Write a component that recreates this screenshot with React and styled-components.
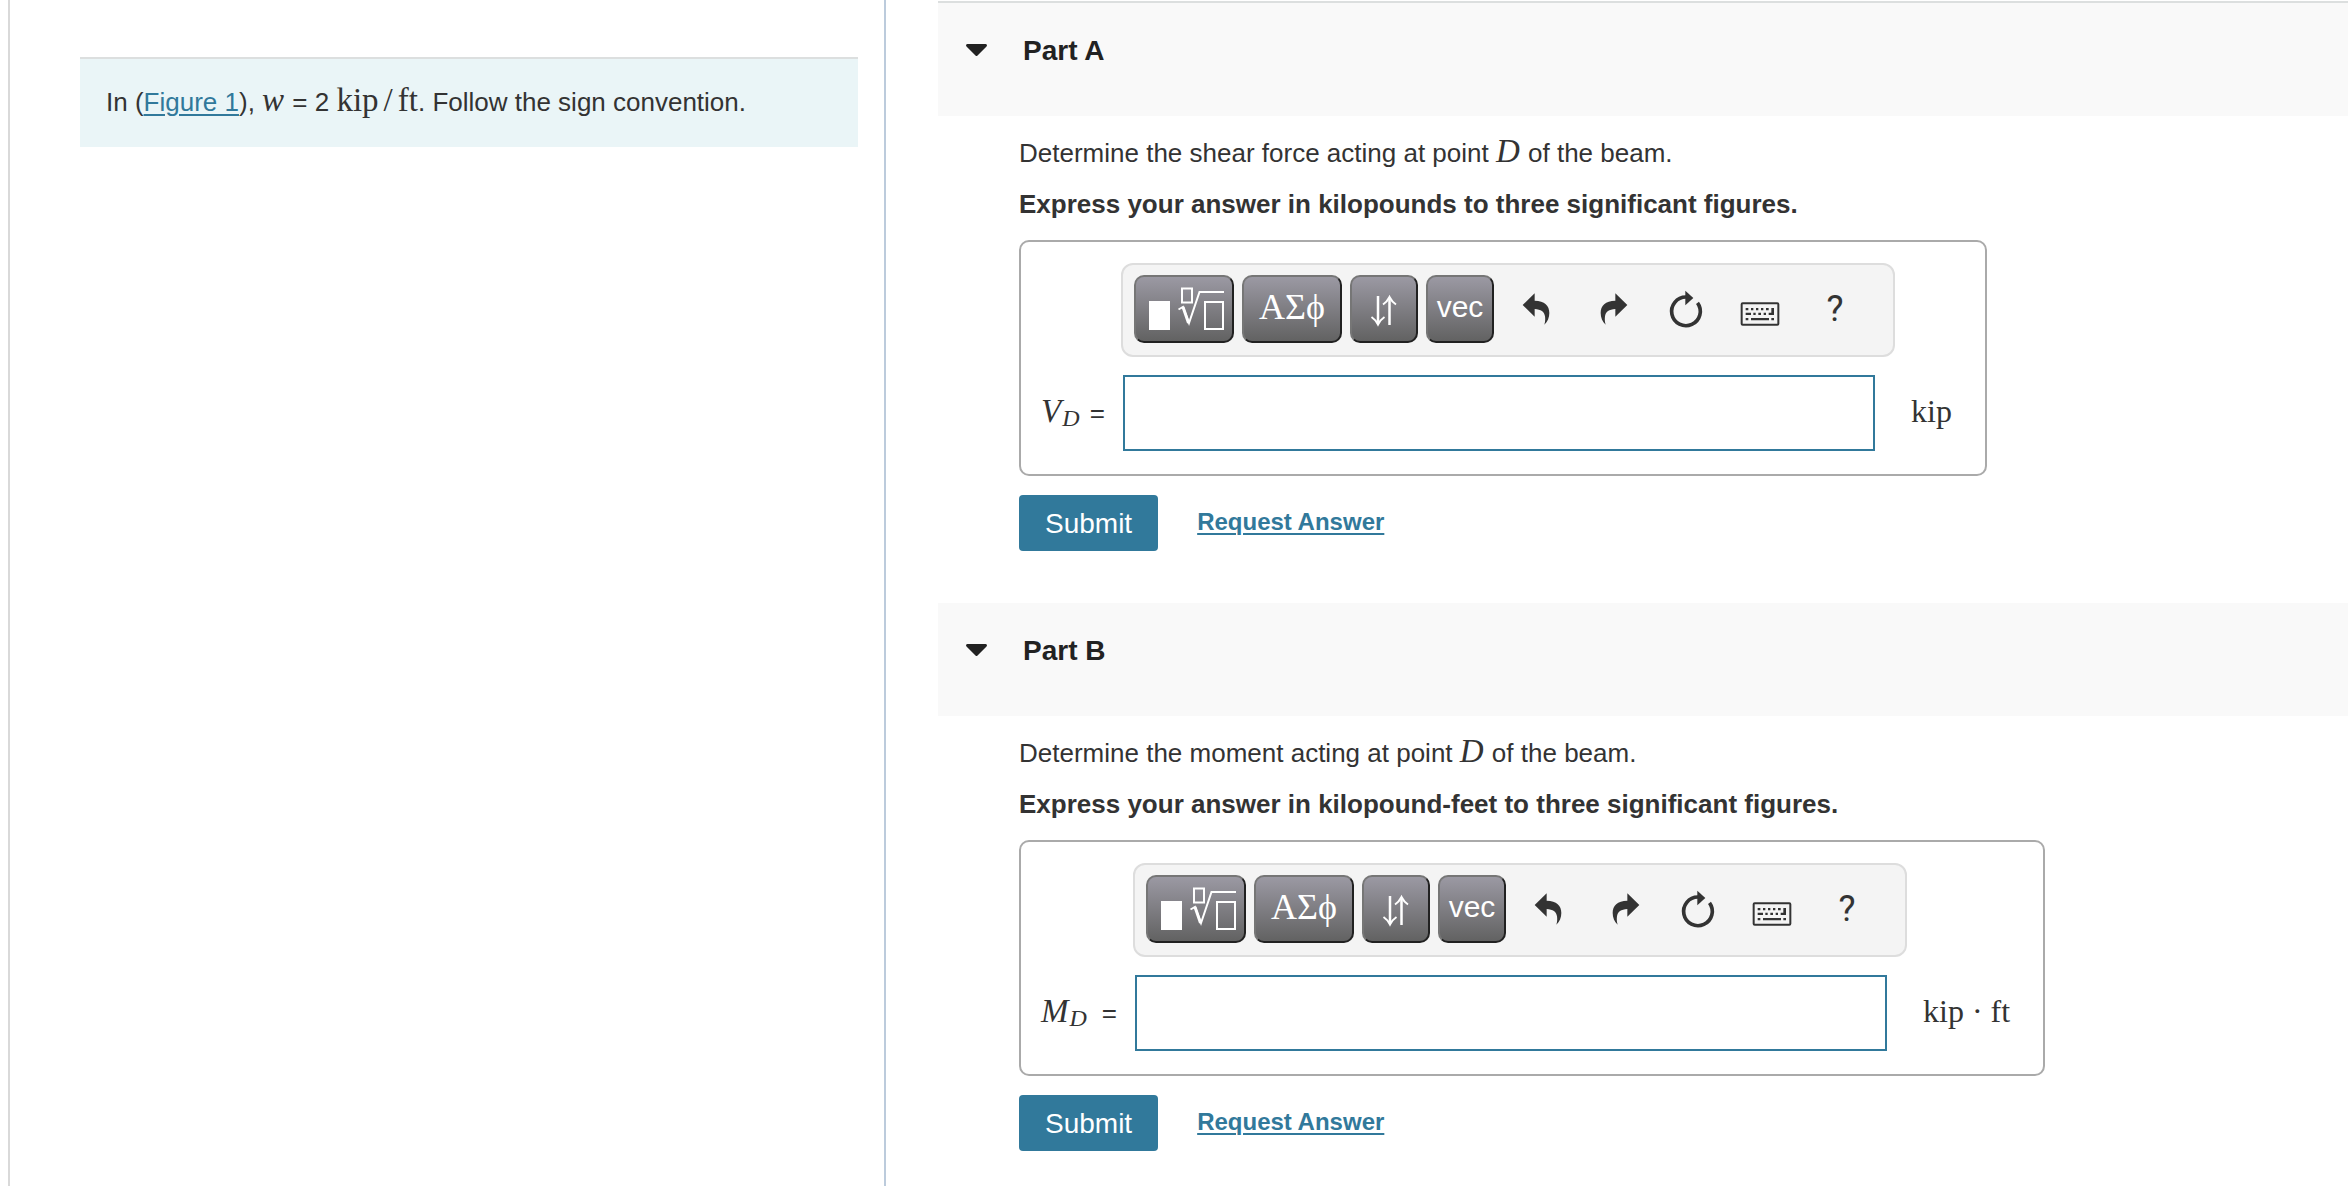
import { useState } from "react";
import styled, { createGlobalStyle } from "styled-components";

const parts = [
  {
    id: "A",
    quantity: "shear force",
    symbol: "V",
    unit: "kip",
    units: "kilopounds",
    labelWidth: 100,
    bordered: true
  },
  {
    id: "B",
    quantity: "moment",
    symbol: "M",
    unit: "kip · ft",
    units: "kilopound-feet",
    labelWidth: 112,
    bordered: false
  }
]

export default function App() {
  return (
    <>
      <GlobalStyle />
      <Page>
        <Aside>
          <Problem>
            In (<Link href="#figure1">Figure 1</Link>), <MathVar>w</MathVar> = 2{' '}
            <MathText>kip<Slash>/</Slash>ft</MathText>. Follow the sign convention.
          </Problem>
        </Aside>
        <Main>
          {parts.map(part=> <Part key={part.id} part={part} />)}
        </Main>
      </Page>
    </>
  )
}

const Part = ({part})=>{
  const [open, setOpen] = useState(true)
  const [answer, setAnswer] = useState('')
  const inputId = `answer-${part.id}`

  return (
    <section>
      <PartHeader $bordered={part.bordered}>
        <Toggle type="button" aria-expanded={open} onClick={()=>setOpen(!open)}>
          <Caret viewBox="0 0 21 14"><path d="M1.5 0h18a1.4 1.4 0 0 1 1 2.4l-9 9a1.4 1.4 0 0 1-2 0l-9-9A1.4 1.4 0 0 1 1.5 0z" /></Caret>
          Part {part.id}
        </Toggle>
      </PartHeader>
      {
        open &&
        <PartBody onSubmit={(e)=>e.preventDefault()}>
          <Question>
            Determine the {part.quantity} acting at point <MathVar>D</MathVar> of the beam.
          </Question>
          <Instruction>
            Express your answer in {part.units} to three significant figures.
          </Instruction>
          <AnswerBox $labelWidth={part.labelWidth}>
            <Toolbar />
            <AnswerLabel htmlFor={inputId}>
              <span><MathVar>{part.symbol}</MathVar><Sub>D</Sub></span>
              <span>=</span>
            </AnswerLabel>
            <AnswerInput
              id={inputId}
              type="text"
              autoComplete="off"
              value={answer}
              onChange={(e)=>setAnswer(e.target.value)}
            />
            <Unit>{part.unit}</Unit>
          </AnswerBox>
          <Actions>
            <Submit type="submit">Submit</Submit>
            <RequestLink href="#request">Request Answer</RequestLink>
          </Actions>
        </PartBody>
      }
    </section>
  )
}

const arrow = "M62 90 98 55V77C128 78 142 92 142 114C142 128 137 140 127 149C130 141 130 132 129 124C127 110 117 103 98 102V125Z"

const Toolbar = ()=>{
  return (
    <ToolbarWrapper>
      <Tool type="button" $wide aria-label="Templates">
        <svg width="96" height="64" viewBox="2 2 96 64" fill="none" stroke="#fff" strokeWidth="2">
          <path d="M15 26h21v29H15z" fill="#fff" stroke="none" />
          <path d="M48 13.5h10v14H48zM71 27h18v27H71z" />
          <path d="M44.5 34.5 49 32l6 16 10.500-31H90" />
          <path d="M49 32l5.500 16" strokeWidth="3" />
        </svg>
      </Tool>
      <GreekTool type="button" $wide>ΑΣϕ</GreekTool>
      <Tool type="button" aria-label="Arrows">
        <svg width="64" height="64" viewBox="2 2 64 64" fill="none" stroke="#fff" strokeWidth="2">
          <path d="M28 21v27M39.5 23v27" strokeWidth="2.5" />
          <path d="M21.5 42c3 2 5 4.500 6.500 7.500 1.500-3 3.500-5.500 6.500-7.500M33 29.500c3-2 5-4.500 6.500-7.500 1.500 3 3.500 5.500 6.500 7.500" />
        </svg>
      </Tool>
      <TextTool type="button">vec</TextTool>
      <IconGroup>
        <IconButton type="button" aria-label="Undo">
          <svg width="74" height="68" viewBox="0 0 222 204"><path d={arrow} /></svg>
        </IconButton>
        <IconButton type="button" aria-label="Redo">
          <svg width="74" height="68" viewBox="0 0 222 204"><path d={arrow} transform="translate(216) scale(-1 1)" /></svg>
        </IconButton>
        <IconButton type="button" aria-label="Reset">
          <svg width="74" height="68" viewBox="0 0 222 204">
            <path d="M108 66A43 43 0 1 0 142.5 83.5" fill="none" stroke="#333" strokeWidth="11" />
            <path d="M106 47 130 69 106 91z" />
          </svg>
        </IconButton>
        <IconButton type="button" aria-label="Keyboard shortcuts">
          <svg width="74" height="68" viewBox="0 0 222 204">
            <rect x="53" y="85" width="110" height="64" rx="3" fill="none" stroke="#333" strokeWidth="6" />
            <path d="M65 99h8v7h-8zM81 99h7v7h-7zM96 99h7v7h-7zM111 99h7v7h-7zM126 99h8v7h-8zM142 99h8v21h-16v-7h8z" />
            <path d="M65 113h16v7H65zM88 113h7v7h-7zM103 113h8v7h-8zM119 113h7v7h-7z" />
            <path d="M65 129h8v7h-8zM81 129h54v7H81zM142 129h8v7h-8z" />
          </svg>
        </IconButton>
        <IconButton type="button" aria-label="Help">?</IconButton>
      </IconGroup>
    </ToolbarWrapper>
  )
}


const GlobalStyle = createGlobalStyle`
  * {
    box-sizing: border-box;
  }

  body {
    margin: 0;
    background: #fff;
    color: #333;
    font-family: "Liberation Sans", Arial, sans-serif;
    font-size: 26px;
    line-height: 30px;
  }

  button, input {
    font: inherit;
    color: inherit;
  }
`

const Page = styled.div`
  display: grid;
  grid-template-columns: minmax(0, 876fr) minmax(0, 1462fr);
  min-height: 100vh;
  margin-left: 8px;
  border-left: 2px solid #d9d9d9;
`

const Aside = styled.aside`
  padding: 57px 26px 0 70px;
  border-right: 2px solid #bccbdc;
`

const Problem = styled.div`
  padding: 28px 26px 30px;
  border-top: 2px solid #dcdfdf;
  background: #eaf5f7;
`

const Link = styled.a`
  color: #31799b;
  text-decoration-thickness: 2px;
  text-underline-offset: 3px;
`

const MathText = styled.span`
  font-family: "Liberation Serif", "Times New Roman", serif;
  font-size: 33px;
  line-height: 0;
`

const MathVar = styled(MathText)`
  padding-right: 1px;
  font-style: italic;
`

const Slash = styled.span`
  padding: 0 5px;
`

const Sub = styled(MathVar)`
  position: relative;
  top: 4px;
  font-size: 24px;
`

const Main = styled.main`
  padding: 1px 0 0 52px;
`

const PartHeader = styled.h2`
  margin: 0;
  padding: 32px 0 49px 28px;
  border-top: ${({$bordered})=>$bordered ? '2px solid #dcdfdf' : '0'};
  background: #f9f9f9;
  font-size: 28px;
  line-height: 32px;
`

const Toggle = styled.button`
  display: flex;
  align-items: center;
  gap: 36px;
  padding: 0;
  border: 0;
  background: none;
  color: #222;
  cursor: pointer;
`

const Caret = styled.svg`
  width: 21px;
  height: 14px;
  fill: #222;
`

const PartBody = styled.form`
  display: flex;
  flex-direction: column;
  align-items: flex-start;
  padding: 22px 0 52px 81px;
`

const Question = styled.p`
  margin: 0 0 21px;
`

const Instruction = styled(Question)`
  font-weight: bold;
`

const AnswerBox = styled.div`
  display: grid;
  grid-template-columns: ${({$labelWidth})=>$labelWidth}px auto auto;
  row-gap: 18px;
  align-items: center;
  padding: 21px 33px 23px 0;
  border: 2px solid #aaa;
  border-radius: 10px;
`

const ToolbarWrapper = styled.div`
  grid-column: 2 / 4;
  justify-self: start;
  display: flex;
  gap: 8px;
  padding: 10px 21px 12px 11px;
  border: 2px solid #ddd;
  border-radius: 12px;
  background: #f4f4f4;
`

const Tool = styled.button`
  width: ${({$wide})=>$wide ? '100px' : '68px'};
  height: 68px;
  padding: 0;
  border: 2px solid;
  border-color: #767676 #212121 #212121 #767676;
  border-radius: 10px;
  background: linear-gradient(#9b99a3, #626262);
  color: #fff;
  cursor: pointer;

  svg{
    display: block;
  }
`

const TextTool = styled(Tool)`
  padding-bottom: 4px;
  font-size: 30px;
`

const GreekTool = styled(TextTool)`
  font-family: "Liberation Serif", "Times New Roman", serif;
  font-size: 36px;
`

const IconGroup = styled.div`
  display: flex;
`

const IconButton = styled.button`
  width: 74px;
  height: 68px;
  padding: 0;
  border: 0;
  background: none;
  font-family: Roboto, sans-serif;
  font-size: 36px;
  cursor: pointer;

  svg{
    display: block;
    fill: #333;
  }
`

const AnswerLabel = styled.label`
  display: flex;
  justify-content: space-between;
  align-items: baseline;
  padding: 0 16px 0 20px;
`

const AnswerInput = styled.input`
  width: 752px;
  height: 76px;
  margin-left: 2px;
  padding: 0 12px;
  border: 2px solid #31799b;
  background: #fff;
`

const Unit = styled(MathText)`
  padding: 0 0 4px 36px;
  font-size: 32px;
  line-height: 30px;
`

const Actions = styled.div`
  display: flex;
  align-items: center;
  gap: 39px;
  margin-top: 19px;
`

const Submit = styled.button`
  height: 56px;
  padding: 2px 26px 0;
  border: 0;
  border-radius: 4px;
  background: #31799b;
  color: #fff;
  font-size: 28px;
  cursor: pointer;
`

const RequestLink = styled(Link)`
  padding-bottom: 2px;
  font-size: 24px;
  font-weight: bold;
`
